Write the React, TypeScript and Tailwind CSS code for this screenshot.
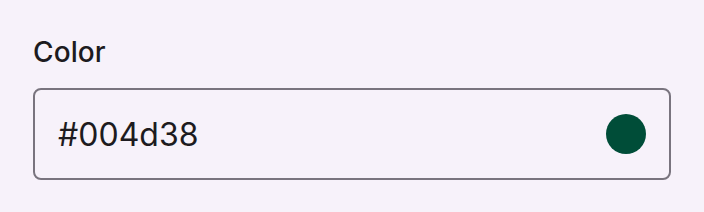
export default function App() {
  const value = '#004d38'

  return (
    <div className="w-[704px] h-[212px] bg-[#f7f2fa] px-[33px] pt-[35px] font-['Inter',sans-serif] text-[#1d1b20]">
      <label className="block text-[28px] leading-[34px] font-medium tracking-[0.1px]">Color</label>
      <div className="mt-[19px] h-[92px] flex items-center justify-between rounded-[8px] border-2 border-[#79747e] pl-[23px] pr-[23px]">
        <span className="text-[32px] leading-[39px]">{value}</span>
        <span className="w-[40px] h-[40px] rounded-full bg-[#004d38]" />
      </div>
    </div>
  )
}
